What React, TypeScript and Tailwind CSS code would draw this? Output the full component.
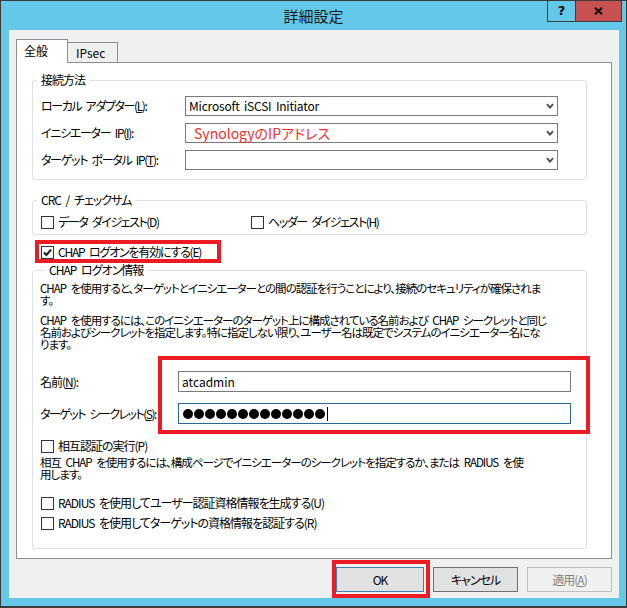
import React from "react";

const FONT = "font-['Noto_Sans_CJK_JP','Noto_Sans',sans-serif] [font-feature-settings:'palt']";

function Chevron() {
  return (
    <svg width="8" height="6" viewBox="0 0 8 6" className="shrink-0">
      <path d="M1 1.2 L4 4.6 L7 1.2" fill="none" stroke="#4d4d4d" strokeWidth="1.9" />
    </svg>
  );
}

function Select({ children }: { children?: React.ReactNode }) {
  return (
    <div className="flex h-[20px] w-[373px] items-center border border-[#7a7a7a] bg-white pl-[3px] pr-[3px]">
      <div className="flex-1 whitespace-nowrap">{children}</div>
      <Chevron />
    </div>
  );
}

function CheckBox({ checked }: { checked?: boolean }) {
  return (
    <span className="flex h-[13px] w-[13px] shrink-0 items-center justify-center border border-[#333] bg-white">
      {checked && (
        <svg width="9" height="9" viewBox="0 0 9 9">
          <path d="M1 4.6 L3.4 7 L8 1.6" fill="none" stroke="#1f1f1f" strokeWidth="2.1" />
        </svg>
      )}
    </span>
  );
}

function CheckRow({ checked, children, className }: { checked?: boolean; children: React.ReactNode; className?: string }) {
  return (
    <div className={`flex h-[14px] items-center gap-[4px] whitespace-nowrap ${className ?? ""}`}>
      <CheckBox checked={checked} />
      <span>{children}</span>
    </div>
  );
}

export default function App() {
  return (
    <div className={`${FONT} flex h-[608px] w-[627px] flex-col border border-b-2 border-[#3b3b3b] bg-[#64c8e9] text-[12px] leading-[14px] tracking-[-1px] [word-spacing:3px] text-black`}>
      {/* title bar */}
      <div className="relative flex h-[29px] shrink-0 items-center justify-center tracking-normal">
        <span className="text-[15px] leading-none text-[#1b1b1b]">詳細設定</span>
        <div className="absolute right-[4px] top-0 flex">
          <div className="flex h-[21px] w-[28px] items-center justify-center border border-r-0 border-t-0 border-[#3d3d3d] font-['DejaVu_Sans',sans-serif] text-[13px] font-bold">
            ?
          </div>
          <div className="flex h-[21px] w-[47px] items-center justify-center border border-t-0 border-[#3d3d3d] bg-[#c75050]">
            <svg width="9" height="8" viewBox="0 0 9 8">
              <path d="M1 0.8 L8 7.2 M8 0.8 L1 7.2" stroke="#111" strokeWidth="2.2" />
            </svg>
          </div>
        </div>
      </div>

      {/* dialog body */}
      <div className="ml-[8px] mr-[7px] flex h-[568px] flex-col bg-[#f0f0f0] px-[7px] pt-[9px]">
        {/* tabs */}
        <div className="flex h-[24px] items-start tracking-normal">
          <div className="relative z-10 h-[24px] w-[52px] border border-b-0 border-[#8c8f96] bg-white pl-[7px] pt-[4px]">全般</div>
          <div className="mt-[3px] flex h-[20px] w-[50px] items-center border border-b-0 border-l-0 border-[#8c8f96] bg-[#f0f0f0] pl-[8px]">IPsec</div>
        </div>

        {/* tab page */}
        <div className="-mt-px h-[497px] border border-[#8c8f96] bg-white">
          {/* 接続方法 */}
          <fieldset className="ml-[15px] mt-[10px] w-[555px] rounded-[3px] border border-[#dcdfe6] pb-[9px] pl-[8px] pt-[9px]">
            <legend className="-ml-[4px] px-[4px]">接続方法</legend>
            <div className="flex flex-col gap-[7px]">
              <div className="flex items-center">
                <div className="w-[144px] whitespace-nowrap tracking-[-1.4px]">ローカル アダプター(<u>L</u>):</div>
                <Select>
                  <span className="tracking-[-0.2px] [word-spacing:2px]">Microsoft iSCSI Initiator</span>
                </Select>
              </div>
              <div className="flex items-center">
                <div className="w-[144px] whitespace-nowrap tracking-[-1.3px]">イニシエーター IP(<u>I</u>):</div>
                <Select>
                  <span className="ml-[5px] text-[14px] tracking-normal text-[#ff2a2a]">SynologyのIPアドレス</span>
                </Select>
              </div>
              <div className="flex items-center">
                <div className="w-[144px] whitespace-nowrap tracking-[-1.3px]">ターゲット ポータル IP(<u>T</u>):</div>
                <Select />
              </div>
            </div>
          </fieldset>

          {/* CRC */}
          <fieldset className="ml-[15px] mt-[13px] w-[555px] rounded-[3px] border border-[#dcdfe6] pb-[5px] pl-[8px] pt-[8px]">
            <legend className="-ml-[4px] px-[4px]">CRC / チェックサム</legend>
            <div className="flex tracking-[-1.4px]">
              <CheckRow className="w-[210px]">データ ダイジェスト(D)</CheckRow>
              <CheckRow>ヘッダー ダイジェスト(H)</CheckRow>
            </div>
          </fieldset>

          {/* CHAP enable */}
          <div className="relative ml-[24px] mt-[10px] w-fit">
            <CheckRow checked className="tracking-[-1.2px]">CHAP ログオンを有効にする(E)</CheckRow>
            <div className="pointer-events-none absolute -left-[6px] -top-[5px] h-[23px] w-[186px] border-4 border-[#ed1c24]" />
          </div>

          {/* CHAP ログオン情報 */}
          <fieldset className="ml-[15px] mt-[4px] w-[555px] rounded-[3px] border border-[#dcdfe6] pb-[18px] pl-[7px] pt-[5px]">
            <legend className="ml-[5px] px-[4px]">CHAP ログオン情報</legend>
            <div className="whitespace-nowrap text-[11.5px] leading-[12px]">
              <div>CHAP を使用すると、ターゲットとイニシエーターとの間の認証を行うことにより、接続のセキュリティが確保されま</div>
              <div>す。</div>
            </div>
            <div className="mt-[8px] whitespace-nowrap text-[11.5px] leading-[12px]">
              <div>CHAP を使用するには、このイニシエーターのターゲット上に構成されている名前および CHAP シークレットと同じ</div>
              <div>名前およびシークレットを指定します。特に指定しない限り、ユーザー名は既定でシステムのイニシエーター名にな</div>
              <div>ります。</div>
            </div>

            <div className="relative mt-[21px] flex flex-col gap-[11px]">
              <div className="flex items-center">
                <div className="w-[138px] whitespace-nowrap">名前(<u>N</u>):</div>
                <div className="flex h-[21px] w-[393px] items-center border border-[#7a7a7a] bg-white pl-[3px] tracking-normal">atcadmin</div>
              </div>
              <div className="flex items-center">
                <div className="w-[138px] whitespace-nowrap tracking-[-1.5px]">ターゲット シークレット(<u>S</u>):</div>
                <div className="flex h-[21px] w-[393px] items-center gap-[1px] border border-[#2a679b] bg-white pl-[4px]">
                  {Array.from({ length: 13 }).map((_, i) => (
                    <span key={i} className="h-[10px] w-[10px] rounded-full bg-black" />
                  ))}
                  <span className="ml-[1px] h-[14px] w-px bg-black" />
                </div>
              </div>
              <div className="pointer-events-none absolute left-[118px] top-[-15px] h-[78px] w-[432px] border-4 border-[#ed1c24]" />
            </div>

            <CheckRow className="ml-[1px] mt-[15px]">相互認証の実行(P)</CheckRow>
            <div className="mt-[3px] whitespace-nowrap text-[11.5px] leading-[12px]">
              <div>相互 CHAP を使用するには、構成ページでイニシエーターのシークレットを指定するか、または RADIUS を使</div>
              <div>用します。</div>
            </div>

            <CheckRow className="ml-[1px] mt-[16px]">RADIUS を使用してユーザー認証資格情報を生成する(U)</CheckRow>
            <CheckRow className="ml-[1px] mt-[6px]">RADIUS を使用してターゲットの資格情報を認証する(R)</CheckRow>
          </fieldset>
        </div>

        {/* buttons */}
        <div className="mt-[8px] flex justify-end gap-[9px]">
          <div className="relative">
            <div className="flex h-[25px] w-[88px] items-center justify-center border border-[#3c7fb1] bg-[#e1e1e1]">OK</div>
            <div className="pointer-events-none absolute -left-[4px] -top-[7px] h-[38px] w-[98px] border-4 border-[#ed1c24]" />
          </div>
          <div className="flex h-[25px] w-[85px] items-center justify-center border border-[#707070] bg-[#e1e1e1]">キャンセル</div>
          <div className="flex h-[25px] w-[85px] items-center justify-center border border-[#bfbfbf] bg-[#f0f0f0] text-[#838383]">
            適用(<u>A</u>)
          </div>
        </div>
      </div>
    </div>
  );
}
